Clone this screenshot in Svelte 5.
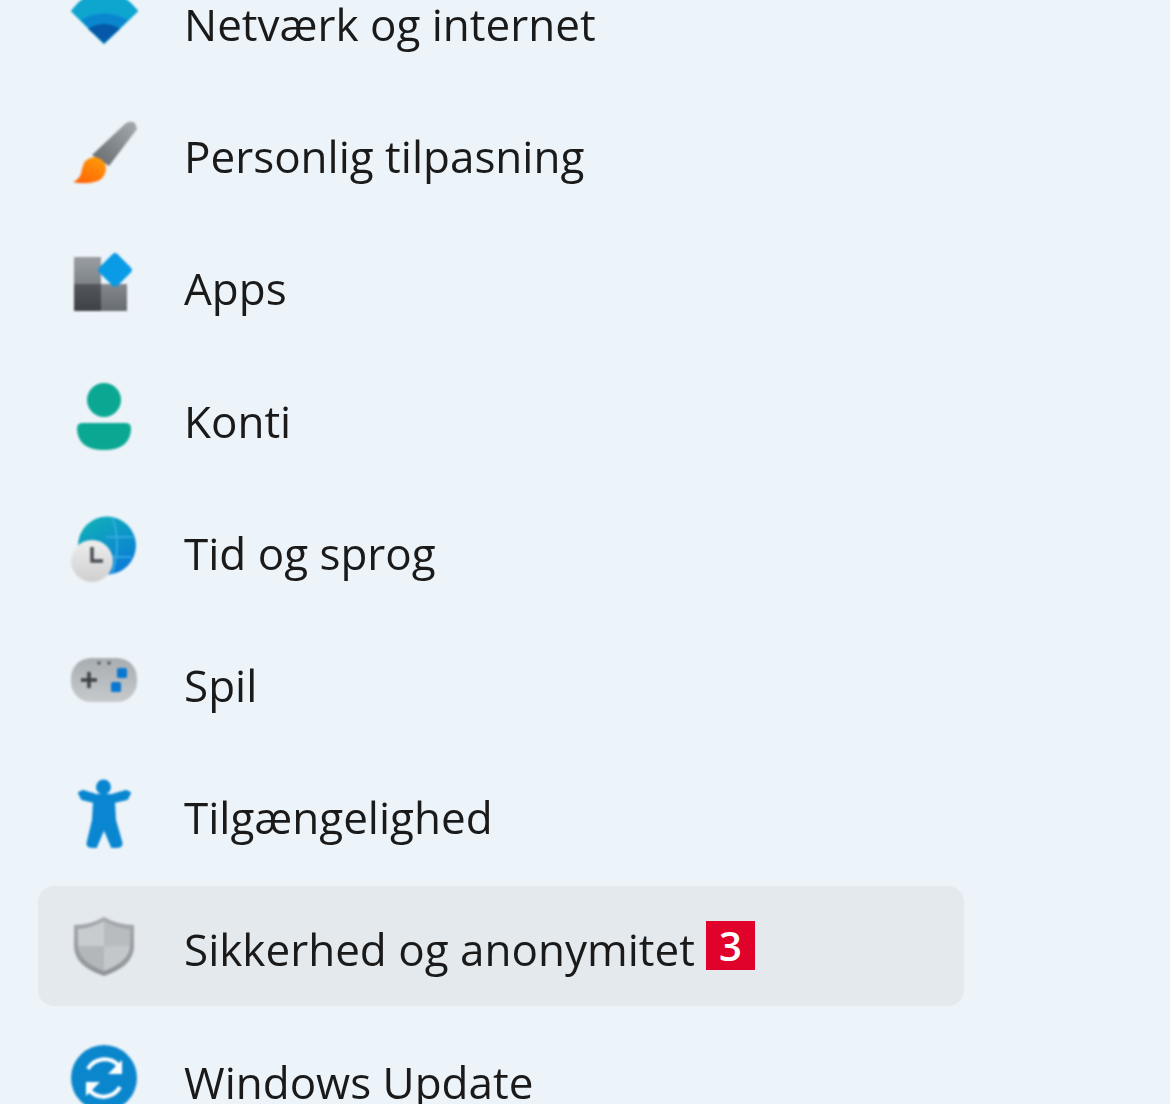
<script>
  const items = [
    { id: 'network', label: 'Netværk og internet' },
    { id: 'brush', label: 'Personlig tilpasning' },
    { id: 'apps', label: 'Apps' },
    { id: 'account', label: 'Konti' },
    { id: 'time', label: 'Tid og sprog' },
    { id: 'game', label: 'Spil' },
    { id: 'access', label: 'Tilgængelighed' },
    { id: 'security', label: 'Sikkerhed og anonymitet', active: true, badge: 3 },
    { id: 'update', label: 'Windows Update' },
  ];
</script>

<div class="page">
  <nav class="list">
    {#each items as item}
      <div class="row" class:active={item.active}>
        <svg class="icon" width="72" height="72" viewBox="0 0 72 72">
          {#if item.id === 'network'}
            <path d="M4 26 Q36 -14 69 26 L36 58Z" fill="#0ea5cf" stroke="#0ea5cf" stroke-width="2" stroke-linejoin="round" />
            <path d="M13 35 Q36 22 60 35 L36 58Z" fill="#0a86cf" />
            <path d="M20 44 Q36 34 52 44 L36 58Z" fill="#0558a8" />
          {:else if item.id === 'brush'}
            <defs>
              <linearGradient id="handle" x1="0" y1="1" x2="1" y2="0">
                <stop offset="0" stop-color="#63686c" />
                <stop offset="1" stop-color="#a6abaf" />
              </linearGradient>
              <linearGradient id="bristle" x1="0.2" y1="1" x2="0.8" y2="0">
                <stop offset="0" stop-color="#ff6408" />
                <stop offset="1" stop-color="#ff9a08" />
              </linearGradient>
            </defs>
            <path d="M57 7 Q62 3 67 6 L69 12 L41 49 L24 38Z" fill="url(#handle)" />
            <path d="M5 65 Q13 62 14 52 Q16 41 26 40 Q36 41 38 50 Q38 60 30 64 Q18 68 5 65Z" fill="url(#bristle)" />
          {:else if item.id === 'apps'}
            <defs>
              <linearGradient id="a1" x1="0" y1="0" x2="0" y2="1">
                <stop offset="0" stop-color="#9a9ea2" />
                <stop offset="1" stop-color="#7f8488" />
              </linearGradient>
              <linearGradient id="a2" x1="0" y1="0" x2="0" y2="1">
                <stop offset="0" stop-color="#54585c" />
                <stop offset="1" stop-color="#3e4246" />
              </linearGradient>
              <linearGradient id="a3" x1="0" y1="0" x2="0" y2="1">
                <stop offset="0" stop-color="#85898d" />
                <stop offset="1" stop-color="#676c70" />
              </linearGradient>
            </defs>
            <rect x="6" y="8" width="27" height="27" fill="url(#a1)" />
            <rect x="6" y="35" width="27" height="27" fill="url(#a2)" />
            <rect x="33" y="35" width="26" height="27" fill="url(#a3)" />
            <rect x="34" y="8" width="26" height="26" rx="4" fill="#0a9be6" transform="rotate(45 47 21)" />
          {:else if item.id === 'account'}
            <circle cx="36" cy="19" r="17" fill="#0aa892" />
            <path d="M14 42 H58 Q63 42 63 48 Q62 69 36 69 Q10 69 9 48 Q9 42 14 42Z" fill="#0aa892" />
          {:else if item.id === 'time'}
            <defs>
              <linearGradient id="globe" x1="0.2" y1="0" x2="0.8" y2="1">
                <stop offset="0" stop-color="#10b0b8" />
                <stop offset="1" stop-color="#0a78d8" />
              </linearGradient>
              <linearGradient id="clock" x1="0" y1="0" x2="0" y2="1">
                <stop offset="0" stop-color="#eeeeee" />
                <stop offset="1" stop-color="#cfcfcf" />
              </linearGradient>
            </defs>
            <circle cx="39" cy="32.5" r="29" fill="url(#globe)" />
            <path d="M44 4 Q54 30 44 61 M38 24 H67 M44 44 H63" fill="none" stroke="#3fb0e8" stroke-width="1.5" />
            <circle cx="24" cy="48" r="21" fill="url(#clock)" />
            <path d="M24 34 V48 H35" fill="none" stroke="#4a4d51" stroke-width="3.5" />
          {:else if item.id === 'game'}
            <defs>
              <linearGradient id="pad" x1="0" y1="0" x2="0" y2="1">
                <stop offset="0" stop-color="#a8adb1" />
                <stop offset="1" stop-color="#c6cacd" />
              </linearGradient>
            </defs>
            <rect x="3" y="13" width="66" height="44" rx="20" fill="url(#pad)" />
            <path d="M21 27 V43 M13 35 H29" stroke="#3c4044" stroke-width="3.5" />
            <rect x="49" y="23" width="10" height="10" rx="1.5" fill="#0a78d0" />
            <rect x="43" y="37" width="10" height="10" rx="1.5" fill="#0a78d0" />
            <circle cx="31" cy="18" r="1.8" fill="#55585c" />
            <circle cx="41" cy="18" r="1.8" fill="#55585c" />
          {:else if item.id === 'access'}
            <circle cx="35.5" cy="9" r="7.5" fill="#0a86d0" />
            <path d="M11 15 L14 21 L26 24 L25 42 L20 63 Q18 69 24 69 L28 69 L36 50 L44 69 L49 69 Q55 69 53 63 L47 42 L46 24 L59 21 L62 15 L58 13 L44 17 H28 L15 13Z" fill="#0a86d0" stroke="#0a86d0" stroke-width="2" stroke-linejoin="round" />
          {:else if item.id === 'security'}
            <defs>
              <linearGradient id="shield" x1="0" y1="0" x2="0" y2="1">
                <stop offset="0" stop-color="#a6aaae" />
                <stop offset="1" stop-color="#8f9498" />
              </linearGradient>
            </defs>
            <path d="M36 7 Q50 15 66 15 V36 Q66 56 36 66 Q6 56 6 36 V15 Q22 15 36 7Z" fill="url(#shield)" />
            <path d="M36 11 Q24 18 10 19 V36 H36Z" fill="#c9ccce" />
            <path d="M36 11 Q48 18 62 19 V36 H36Z" fill="#b9bcbf" />
            <path d="M10 36 Q11 52 36 61 V36Z" fill="#b3b7ba" />
            <path d="M62 36 Q61 52 36 61 V36Z" fill="#c4c7ca" />
          {:else if item.id === 'update'}
            <circle cx="36" cy="36" r="33" fill="#0a86cc" />
            <path d="M20 27 A19 19 0 0 1 50 23" fill="none" stroke="#fff" stroke-width="4" />
            <path d="M52 45 A19 19 0 0 1 22 49" fill="none" stroke="#fff" stroke-width="4" />
            <path d="M54 18 V32 H40Z" fill="#fff" />
            <path d="M18 54 V40 H32Z" fill="#fff" />
          {/if}
        </svg>
        <span class="label">{item.label}</span>
        {#if item.badge}
          <span class="badge">{item.badge}</span>
        {/if}
      </div>
    {/each}
  </nav>
</div>

<style>
  :global(body) {
    margin: 0;
    background: #edf4f9;
  }

  .page {
    width: 1170px;
    height: 1104px;
    overflow: hidden;
    background: #edf4f9;
    font-family: "Open Sans", "Noto Sans", sans-serif;
    color: #1a1a1a;
  }

  .list {
    display: flex;
    flex-direction: column;
    gap: 12.2px;
    width: 926px;
    margin-top: -39.5px;
    margin-left: 38px;
  }

  .row {
    display: flex;
    align-items: center;
    height: 120px;
    flex: none;
    padding-left: 30px;
    border-radius: 16px;
  }

  .row.active {
    background: #e4e9ee;
  }

  .icon {
    flex: none;
    margin-right: 44px;
    filter: blur(0.8px);
  }

  .label {
    font-size: 44px;
    line-height: 60px;
    padding-top: 7px;
    filter: blur(0.7px);
  }

  .badge {
    display: flex;
    align-items: center;
    justify-content: center;
    width: 49px;
    height: 49px;
    margin-left: 11px;
    background: #e0022a;
    color: #fff;
    font-size: 40px;
    font-weight: 600;
    line-height: 1;
  }
</style>
